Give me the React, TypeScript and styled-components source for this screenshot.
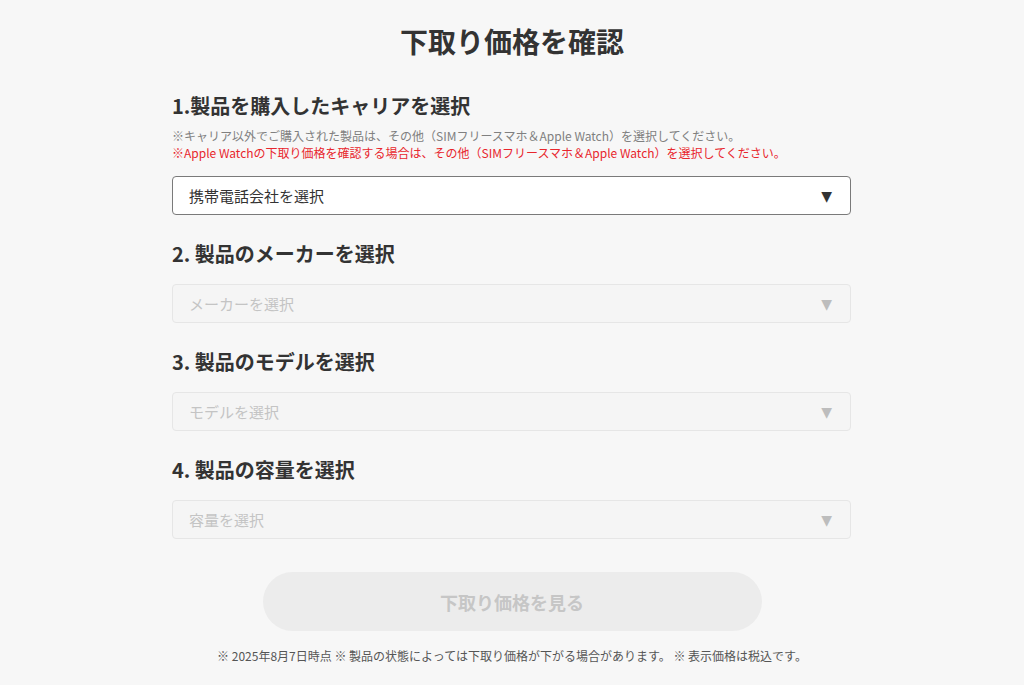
import React from 'react';
import styled, { createGlobalStyle } from 'styled-components';

const GlobalStyle = createGlobalStyle`
  * { box-sizing: border-box; }
  html, body {
    margin: 0;
    padding: 0;
    background: #f7f7f7;
    font-family: "Noto Sans CJK JP", "Noto Sans", sans-serif;
    color: #333;
  }
`;

const steps = [
  { title: '2. 製品のメーカーを選択', placeholder: 'メーカーを選択' },
  { title: '3. 製品のモデルを選択', placeholder: 'モデルを選択' },
  { title: '4. 製品の容量を選択', placeholder: '容量を選択' },
];

const App = () => {
  return (
    <>
      <GlobalStyle />
      <Page>
        <Title>下取り価格を確認</Title>

        <Form>
          <Section>
            <Heading>1.製品を購入したキャリアを選択</Heading>
            <Notes>
              <Note>※キャリア以外でご購入された製品は、その他（SIMフリースマホ＆Apple Watch）を選択してください。</Note>
              <Note $warn>※Apple Watchの下取り価格を確認する場合は、その他（SIMフリースマホ＆Apple Watch）を選択してください。</Note>
            </Notes>
            <Select>
              <SelectText>携帯電話会社を選択</SelectText>
              <Arrow>▼</Arrow>
            </Select>
          </Section>

          {steps.map((s) => (
            <Section key={s.title}>
              <Heading>{s.title}</Heading>
              <Select $disabled>
                <SelectText $disabled>{s.placeholder}</SelectText>
                <Arrow $disabled>▼</Arrow>
              </Select>
            </Section>
          ))}
        </Form>

        <SubmitButton disabled>下取り価格を見る</SubmitButton>

        <Footer>※ 2025年8月7日時点 ※ 製品の状態によっては下取り価格が下がる場合があります。 ※ 表示価格は税込です。</Footer>
      </Page>
    </>
  );
};

export default App;

const Page = styled.div`
  display: flex;
  flex-direction: column;
  align-items: center;
  padding-top: 21px;
  padding-bottom: 20px;
`;

const Title = styled.h1`
  margin: 0 0 30px;
  font-size: 28px;
  line-height: 40px;
  font-weight: 700;
  color: #333;
`;

const Form = styled.div`
  width: 679px;
  margin-right: 1px;
  display: flex;
  flex-direction: column;
  gap: 24px;
`;

const Section = styled.div`
  display: flex;
  flex-direction: column;
`;

const Heading = styled.h2`
  margin: 0 0 15px;
  font-size: 20px;
  line-height: 30px;
  font-weight: 700;
  color: #333;
`;

const Notes = styled.div`
  margin-top: -9px;
  margin-bottom: 15px;
`;

const Note = styled.p<{ $warn?: boolean }>`
  margin: 0;
  font-size: 12px;
  line-height: 17px;
  color: ${(p) => (p.$warn ? '#e8262d' : '#808080')};
`;

const Select = styled.div<{ $disabled?: boolean }>`
  height: 39px;
  display: flex;
  align-items: center;
  justify-content: space-between;
  padding: 0 18px 0 16px;
  border-radius: 4px;
  border: 1px solid ${(p) => (p.$disabled ? '#e6e6e6' : '#7a7a7a')};
  background: ${(p) => (p.$disabled ? '#f5f5f5' : '#fff')};
`;

const SelectText = styled.span<{ $disabled?: boolean }>`
  font-size: 15px;
  color: ${(p) => (p.$disabled ? '#c4c4c4' : '#333')};
`;

const Arrow = styled.span<{ $disabled?: boolean }>`
  font-size: 14px;
  font-family: "DejaVu Sans", sans-serif;
  color: ${(p) => (p.$disabled ? '#bdbdbd' : '#333')};
`;

const SubmitButton = styled.button`
  margin-top: 33px;
  width: 499px;
  height: 59px;
  border: none;
  border-radius: 30px;
  background: #ececec;
  color: #c6c6c6;
  font-family: "Noto Sans CJK JP", "Noto Sans", sans-serif;
  font-size: 18px;
  font-weight: 700;
  cursor: not-allowed;
`;

const Footer = styled.p`
  margin: 16px 0 0;
  font-size: 12px;
  line-height: 17px;
  color: #555;
`;
